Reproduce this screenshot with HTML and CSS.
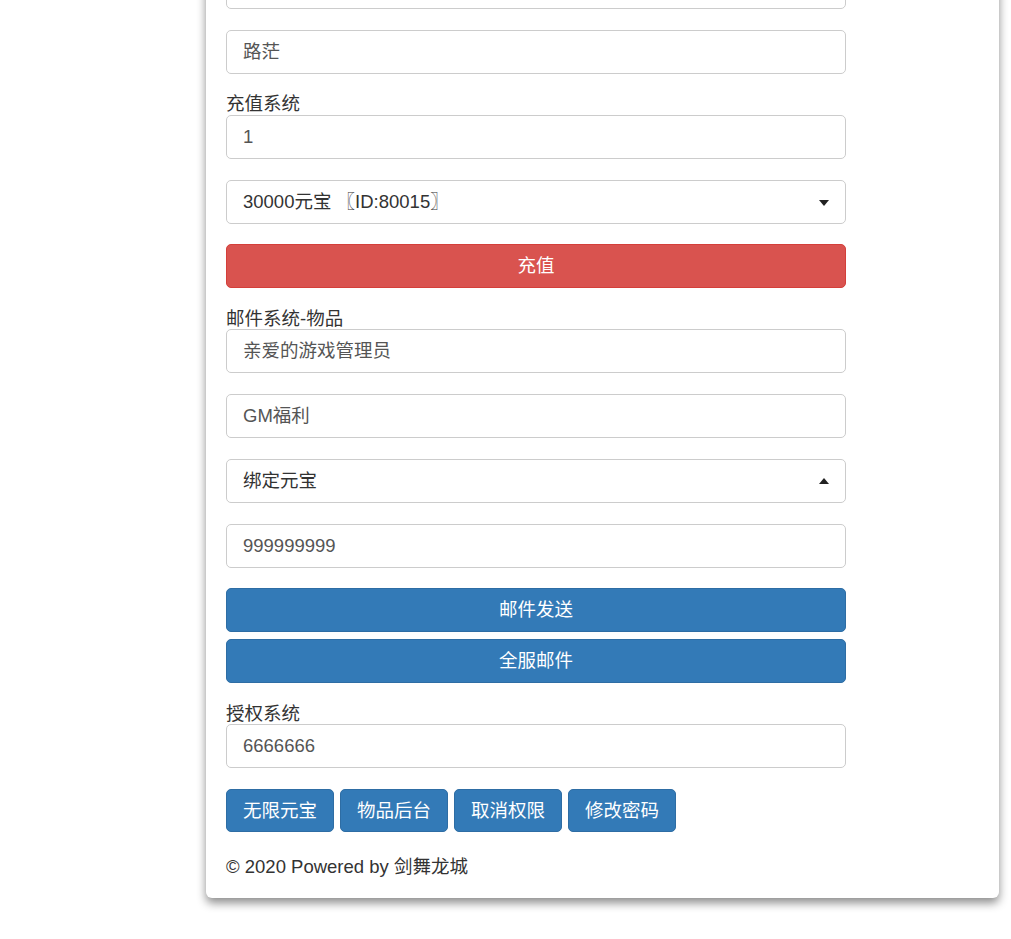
FILE: index.html
```html
<!DOCTYPE html>
<html lang="zh-CN">
<head>
<meta charset="utf-8">
<title>GM</title>
<link rel="stylesheet" href="styles.css">
</head>
<body>
<div class="panel">
  <div class="field"></div>
  <div class="field">路茫</div>
  <div class="label">充值系统</div>
  <div class="field">1</div>
  <div class="field select">30000元宝 〖ID:80015〗<span class="caret down"></span></div>
  <div class="btn btn-danger block">充值</div>
  <div class="label">邮件系统-物品</div>
  <div class="field">亲爱的游戏管理员</div>
  <div class="field">GM福利</div>
  <div class="field select">绑定元宝<span class="caret up"></span></div>
  <div class="field">999999999</div>
  <div class="btn btn-primary block tight">邮件发送</div>
  <div class="btn btn-primary block">全服邮件</div>
  <div class="label">授权系统</div>
  <div class="field">6666666</div>
  <div class="btn-row">
    <div class="btn btn-primary small">无限元宝</div>
    <div class="btn btn-primary small">物品后台</div>
    <div class="btn btn-primary small">取消权限</div>
    <div class="btn btn-primary small">修改密码</div>
  </div>
  <div class="footer">© 2020 Powered by 剑舞龙城</div>
</div>
</body>
</html>
```
FILE: styles.css
```css
html, body {
  margin: 0;
  padding: 0;
  background: #fff;
  overflow: hidden;
}
body {
  font-family: "Liberation Sans", "Noto Sans CJK SC", sans-serif;
  font-size: 18.5px;
  color: #333;
  height: 939px;
}
.panel {
  margin-top: -55px;
  margin-left: 206px;
  width: 793px;
  box-sizing: border-box;
  padding: 20px 153px 21px 20px;
  background: #fff;
  border-radius: 0 0 6px 6px;
  box-shadow: 0 5px 10px rgba(0, 0, 0, 0.45);
}
.field {
  position: relative;
  box-sizing: border-box;
  height: 44px;
  margin-bottom: 20.7px;
  padding: 0 16px;
  border: 1px solid #ccc;
  border-radius: 5px;
  color: #555;
  line-height: 42px;
  white-space: nowrap;
}
.select {
  color: #333;
}
.caret {
  position: absolute;
  right: 16px;
  top: 19px;
  width: 0;
  height: 0;
  border-left: 5.5px solid transparent;
  border-right: 5.5px solid transparent;
}
.caret.down {
  border-top: 6px solid #222;
}
.caret.up {
  top: 18px;
  border-bottom: 6px solid #222;
}
.label {
  height: 20.5px;
  line-height: 20px;
  color: #333;
}
.btn {
  box-sizing: border-box;
  height: 44px;
  line-height: 42px;
  text-align: center;
  color: #fff;
  border: 1px solid transparent;
  border-radius: 5px;
}
.block {
  margin-bottom: 20.7px;
}
.block.tight {
  margin-bottom: 7px;
}
.btn-danger {
  background: #d9534f;
  border-color: #d43f3a;
}
.btn-primary {
  background: #337ab7;
  border-color: #2e6da4;
}
.btn-row {
  display: flex;
  gap: 6px;
}
.btn.small {
  height: 43px;
  line-height: 41px;
  padding: 0 16px;
}
.footer {
  margin-top: 25px;
  line-height: 20px;
  color: #333;
}
```
